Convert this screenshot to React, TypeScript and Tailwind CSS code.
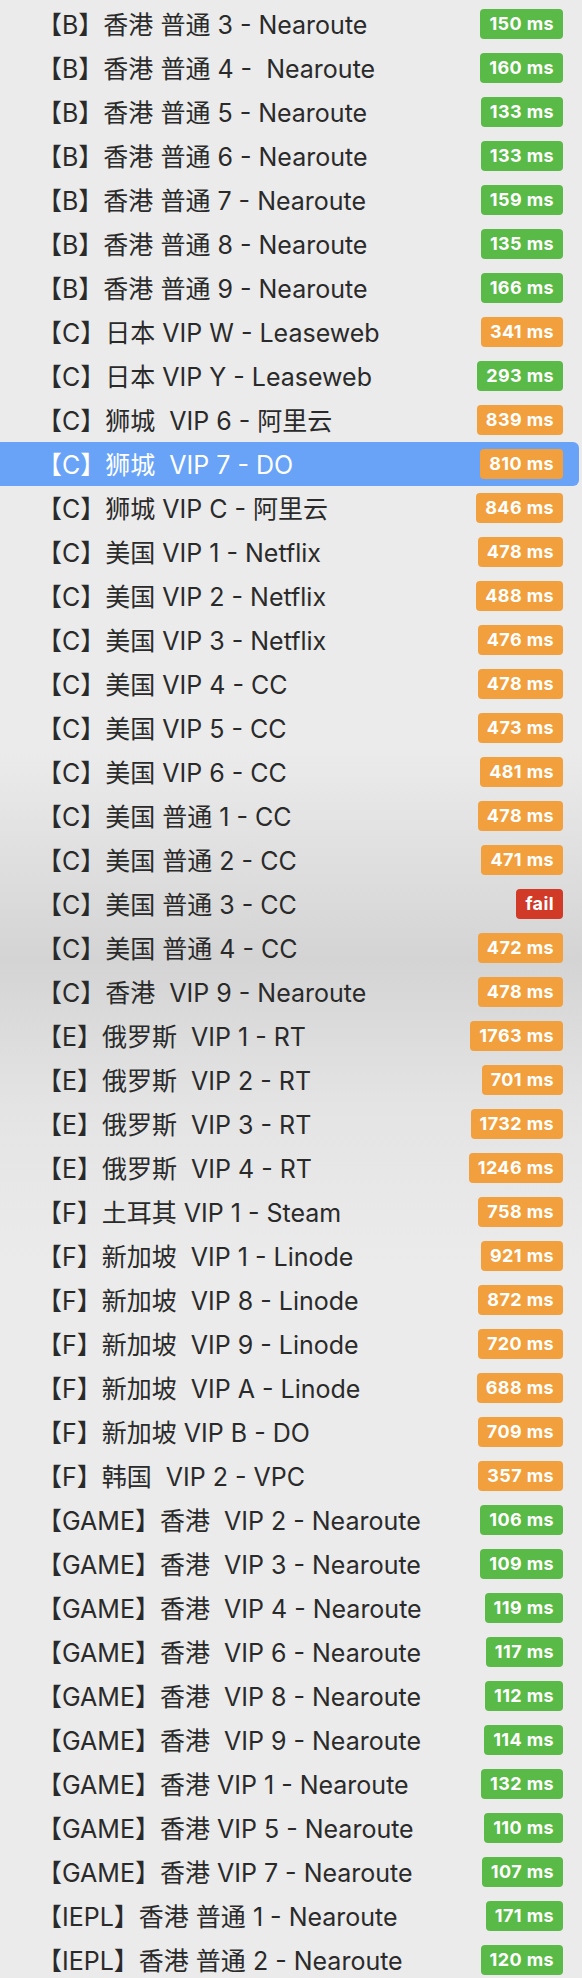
import React from "react";

type Tone = "green" | "orange" | "red";

interface INode {
  name: string;
  ping: string;
  tone: Tone;
}

const nodes: INode[] = [
  { name: "【B】香港 普通 3 - Nearoute", ping: "150 ms", tone: "green" },
  { name: "【B】香港 普通 4 -  Nearoute", ping: "160 ms", tone: "green" },
  { name: "【B】香港 普通 5 - Nearoute", ping: "133 ms", tone: "green" },
  { name: "【B】香港 普通 6 - Nearoute", ping: "133 ms", tone: "green" },
  { name: "【B】香港 普通 7 - Nearoute", ping: "159 ms", tone: "green" },
  { name: "【B】香港 普通 8 - Nearoute", ping: "135 ms", tone: "green" },
  { name: "【B】香港 普通 9 - Nearoute", ping: "166 ms", tone: "green" },
  { name: "【C】日本 VIP W - Leaseweb", ping: "341 ms", tone: "orange" },
  { name: "【C】日本 VIP Y - Leaseweb", ping: "293 ms", tone: "green" },
  { name: "【C】狮城  VIP 6 - 阿里云", ping: "839 ms", tone: "orange" },
  { name: "【C】狮城  VIP 7 - DO", ping: "810 ms", tone: "orange" },
  { name: "【C】狮城 VIP C - 阿里云", ping: "846 ms", tone: "orange" },
  { name: "【C】美国 VIP 1 - Netflix", ping: "478 ms", tone: "orange" },
  { name: "【C】美国 VIP 2 - Netflix", ping: "488 ms", tone: "orange" },
  { name: "【C】美国 VIP 3 - Netflix", ping: "476 ms", tone: "orange" },
  { name: "【C】美国 VIP 4 - CC", ping: "478 ms", tone: "orange" },
  { name: "【C】美国 VIP 5 - CC", ping: "473 ms", tone: "orange" },
  { name: "【C】美国 VIP 6 - CC", ping: "481 ms", tone: "orange" },
  { name: "【C】美国 普通 1 - CC", ping: "478 ms", tone: "orange" },
  { name: "【C】美国 普通 2 - CC", ping: "471 ms", tone: "orange" },
  { name: "【C】美国 普通 3 - CC", ping: "fail", tone: "red" },
  { name: "【C】美国 普通 4 - CC", ping: "472 ms", tone: "orange" },
  { name: "【C】香港  VIP 9 - Nearoute", ping: "478 ms", tone: "orange" },
  { name: "【E】俄罗斯  VIP 1 - RT", ping: "1763 ms", tone: "orange" },
  { name: "【E】俄罗斯  VIP 2 - RT", ping: "701 ms", tone: "orange" },
  { name: "【E】俄罗斯  VIP 3 - RT", ping: "1732 ms", tone: "orange" },
  { name: "【E】俄罗斯  VIP 4 - RT", ping: "1246 ms", tone: "orange" },
  { name: "【F】土耳其 VIP 1 - Steam", ping: "758 ms", tone: "orange" },
  { name: "【F】新加坡  VIP 1 - Linode", ping: "921 ms", tone: "orange" },
  { name: "【F】新加坡  VIP 8 - Linode", ping: "872 ms", tone: "orange" },
  { name: "【F】新加坡  VIP 9 - Linode", ping: "720 ms", tone: "orange" },
  { name: "【F】新加坡  VIP A - Linode", ping: "688 ms", tone: "orange" },
  { name: "【F】新加坡 VIP B - DO", ping: "709 ms", tone: "orange" },
  { name: "【F】韩国  VIP 2 - VPC", ping: "357 ms", tone: "orange" },
  { name: "【GAME】香港  VIP 2 - Nearoute", ping: "106 ms", tone: "green" },
  { name: "【GAME】香港  VIP 3 - Nearoute", ping: "109 ms", tone: "green" },
  { name: "【GAME】香港  VIP 4 - Nearoute", ping: "119 ms", tone: "green" },
  { name: "【GAME】香港  VIP 6 - Nearoute", ping: "117 ms", tone: "green" },
  { name: "【GAME】香港  VIP 8 - Nearoute", ping: "112 ms", tone: "green" },
  { name: "【GAME】香港  VIP 9 - Nearoute", ping: "114 ms", tone: "green" },
  { name: "【GAME】香港 VIP 1 - Nearoute", ping: "132 ms", tone: "green" },
  { name: "【GAME】香港 VIP 5 - Nearoute", ping: "110 ms", tone: "green" },
  { name: "【GAME】香港 VIP 7 - Nearoute", ping: "107 ms", tone: "green" },
  { name: "【IEPL】香港 普通 1 - Nearoute", ping: "171 ms", tone: "green" },
  { name: "【IEPL】香港 普通 2 - Nearoute", ping: "120 ms", tone: "green" },
];

const toneClass: Record<Tone, string> = {
  green: "bg-[#5aba47]",
  orange: "bg-[#f29f3d]",
  red: "bg-[#d13a27]",
};

const SELECTED = 10;

const NodeRow = ({ node, active }: { node: INode; active: boolean }) => {
  return (
    <div
      className={`flex items-center justify-between h-[44px] mr-[3px] pl-[37px] pr-[16px] rounded-r-[6px] ${
        active ? "bg-[#68a3f8] text-white" : "text-[#2a2a2a]"
      }`}
    >
      <span className="text-[25px] whitespace-pre pt-[3px] leading-none">{node.name}</span>
      <span
        className={`${toneClass[node.tone]} text-white font-bold text-[18px] leading-none h-[30px] px-[9px] flex items-center rounded-[4px] tracking-[0.4px]`}
      >
        {node.ping}
      </span>
    </div>
  );
};

export default function App() {
  return (
    <div
      className="w-[582px] h-[1978px] overflow-hidden pt-[2px] bg-[linear-gradient(180deg,#ebebeb_0%,#ebebeb_38%,#d4d4d4_48.5%,#e4e4e4_56%,#ebebeb_64%,#ebebeb_100%)]"
      style={{ fontFamily: 'Inter, "Noto Sans CJK SC", sans-serif' }}
    >
      {nodes.map((node, i) => (
        <NodeRow key={i} node={node} active={i === SELECTED} />
      ))}
    </div>
  );
}
